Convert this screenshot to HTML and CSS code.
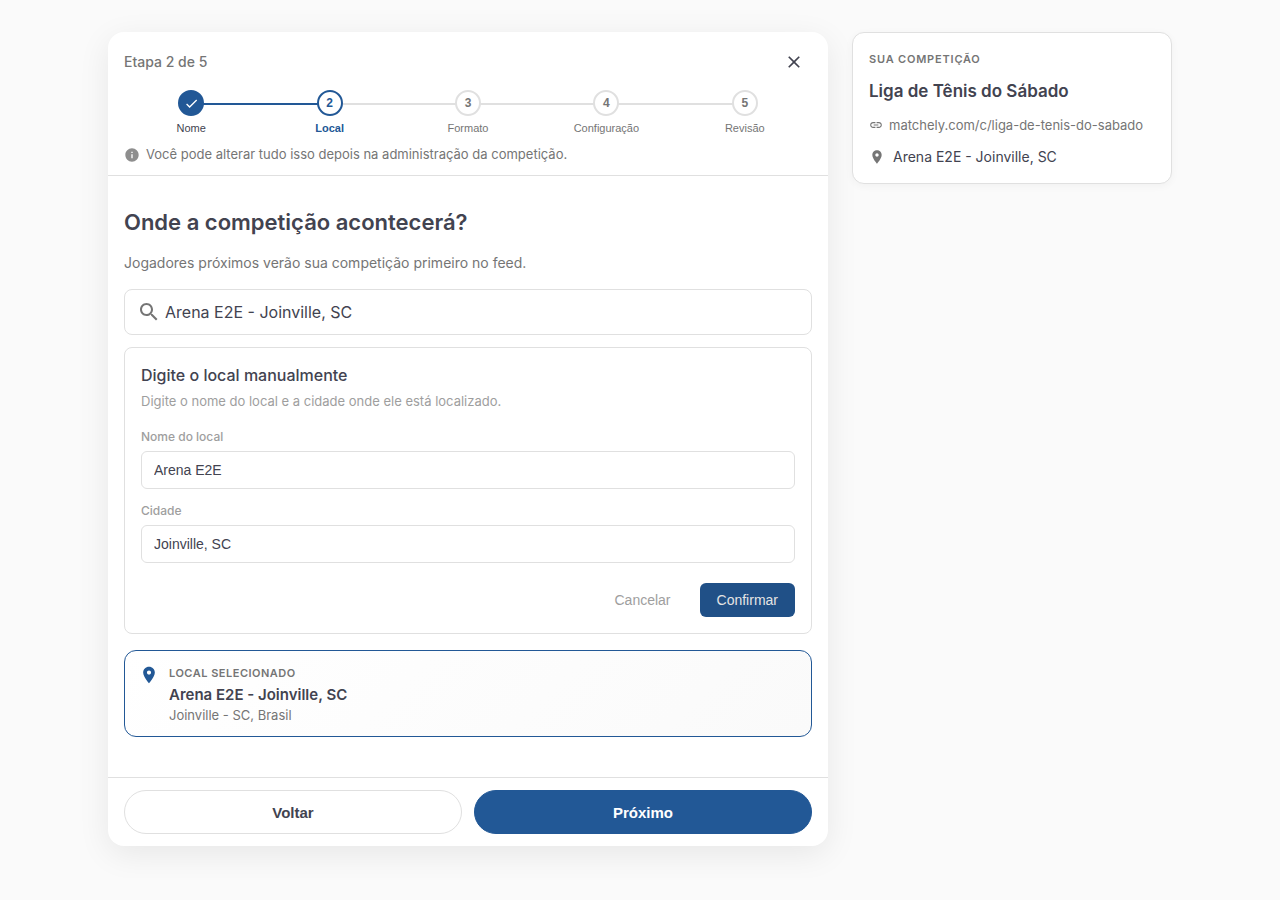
FILE: index.html
```html
<!DOCTYPE html>
<html lang="pt-BR">
<head>
<meta charset="utf-8">
<meta name="viewport" content="width=device-width, initial-scale=1">
<title>Nova competição</title>
<link rel="stylesheet" href="styles.css">
</head>
<body>
<div class="layout">
  <main class="wizard">
    <header class="wizard-header">
      <div class="topbar">
        <span class="step-count">Etapa 2 de 5</span>
        <button class="close" type="button" aria-label="Fechar">
          <svg width="20" height="20" viewBox="0 0 24 24" fill="currentColor"><path d="M19 6.41 17.59 5 12 10.59 6.41 5 5 6.41 10.59 12 5 17.59 6.41 19 12 13.41 17.59 19 19 17.59 13.41 12z"/></svg>
        </button>
      </div>
      <ol class="steps">
        <li class="step done"><span class="dot"><svg width="15" height="15" viewBox="0 0 24 24" fill="currentColor"><path d="M9 16.17 4.83 12l-1.42 1.41L9 19 21 7l-1.41-1.41z"/></svg></span><span class="step-label">Nome</span></li>
        <li class="step current" aria-current="step"><span class="dot">2</span><span class="step-label">Local</span></li>
        <li class="step"><span class="dot">3</span><span class="step-label">Formato</span></li>
        <li class="step"><span class="dot">4</span><span class="step-label">Configuração</span></li>
        <li class="step"><span class="dot">5</span><span class="step-label">Revisão</span></li>
      </ol>
      <p class="hint">
        <svg width="16" height="16" viewBox="0 0 24 24" fill="currentColor"><path d="M12 2C6.48 2 2 6.48 2 12s4.48 10 10 10 10-4.48 10-10S17.52 2 12 2m1 15h-2v-6h2zm0-8h-2V7h2z"/></svg>
        <span>Você pode alterar tudo isso depois na administração da competição.</span>
      </p>
    </header>

    <section class="content">
      <h1>Onde a competição acontecerá?</h1>
      <p class="lead">Jogadores próximos verão sua competição primeiro no feed.</p>

      <label class="search">
        <svg width="24" height="24" viewBox="0 0 24 24" fill="currentColor"><path d="M15.5 14h-.79l-.28-.27C15.41 12.59 16 11.11 16 9.5 16 5.91 13.09 3 9.5 3S3 5.91 3 9.5 5.91 16 9.5 16c1.61 0 3.09-.59 4.23-1.57l.27.28v.79l5 4.99L20.49 19zm-6 0C7.01 14 5 11.99 5 9.5S7.01 5 9.5 5 14 7.01 14 9.5 11.99 14 9.5 14"/></svg>
        <input type="text" aria-label="Buscar local" value="Arena E2E - Joinville, SC">
      </label>

      <form class="manual">
        <h2>Digite o local manualmente</h2>
        <p class="manual-text">Digite o nome do local e a cidade onde ele está localizado.</p>
        <label class="field-label" for="venue">Nome do local</label>
        <input class="field" id="venue" type="text" value="Arena E2E">
        <label class="field-label" for="city">Cidade</label>
        <input class="field" id="city" type="text" value="Joinville, SC">
        <div class="manual-actions">
          <button class="cancel" type="button">Cancelar</button>
          <button class="confirm" type="button">Confirmar</button>
        </div>
      </form>

      <div class="selected">
        <svg width="20" height="20" viewBox="0 0 24 24" fill="currentColor"><path d="M12 2C8.13 2 5 5.13 5 9c0 5.25 7 13 7 13s7-7.75 7-13c0-3.87-3.13-7-7-7m0 9.5c-1.38 0-2.5-1.12-2.5-2.5s1.12-2.5 2.5-2.5 2.5 1.12 2.5 2.5-1.12 2.5-2.5 2.5"/></svg>
        <div>
          <p class="overline">LOCAL SELECIONADO</p>
          <p class="selected-name">Arena E2E - Joinville, SC</p>
          <p class="selected-city">Joinville - SC, Brasil</p>
        </div>
      </div>
    </section>

    <footer class="wizard-footer">
      <button class="nav-button back" type="button">Voltar</button>
      <button class="nav-button next" type="button">Próximo</button>
    </footer>
  </main>

  <aside class="summary">
    <p class="overline">SUA COMPETIÇÃO</p>
    <h2>Liga de Tênis do Sábado</h2>
    <p class="summary-link">
      <svg width="14" height="14" viewBox="0 0 24 24" fill="currentColor"><path d="M3.9 12c0-1.71 1.39-3.1 3.1-3.1h4V7H7c-2.76 0-5 2.24-5 5s2.24 5 5 5h4v-1.9H7c-1.71 0-3.1-1.39-3.1-3.1M8 13h8v-2H8zm9-6h-4v1.9h4c1.71 0 3.1 1.39 3.1 3.1s-1.39 3.1-3.1 3.1h-4V17h4c2.76 0 5-2.24 5-5s-2.24-5-5-5"/></svg>
      <span>matchely.com/c/liga-de-tenis-do-sabado</span>
    </p>
    <p class="summary-place">
      <svg width="16" height="16" viewBox="0 0 24 24" fill="currentColor"><path d="M12 2C8.13 2 5 5.13 5 9c0 5.25 7 13 7 13s7-7.75 7-13c0-3.87-3.13-7-7-7m0 9.5c-1.38 0-2.5-1.12-2.5-2.5s1.12-2.5 2.5-2.5 2.5 1.12 2.5 2.5-1.12 2.5-2.5 2.5"/></svg>
      <span>Arena E2E - Joinville, SC</span>
    </p>
  </aside>
</div>
</body>
</html>
```

FILE: styles.css
```css
:root {
  --blue: #225896;
  --ink: #424350;
  --muted: #757575;
  --faint: #9e9e9e;
  --line: #e0e0e0;
}

* { box-sizing: border-box; }

body {
  margin: 0;
  background: #fafafa;
  color: var(--ink);
  font-family: Inter, sans-serif;
}

h1, h2, p, ol { margin: 0; padding: 0; }
svg { display: block; flex: none; }
button, input { font-family: "Liberation Sans", Arial, sans-serif; }
button { cursor: pointer; }

.layout {
  display: grid;
  grid-template-columns: minmax(0, 720px) 320px;
  justify-content: center;
  align-items: start;
  gap: 24px;
  padding: 32px 24px;
}

.wizard {
  background: #fff;
  border-radius: 16px;
  box-shadow: 0 8px 32px rgba(0, 0, 0, 0.08);
}

.wizard-header {
  padding: 12px 16px 10px;
  border-bottom: 1px solid var(--line);
}

.topbar {
  display: flex;
  align-items: center;
  justify-content: space-between;
  height: 36px;
}

.step-count { font-size: 14px; font-weight: 500; line-height: 20px; color: var(--muted); }

.close {
  padding: 8px;
  border: 0;
  background: none;
  color: var(--ink);
}

.steps {
  display: grid;
  grid-template-columns: repeat(5, 1fr);
  gap: 4px;
  margin-top: 10px;
  list-style: none;
}

.step {
  position: relative;
  display: flex;
  flex-direction: column;
  align-items: center;
  gap: 4px;
  font-family: "Liberation Sans", Arial, sans-serif;
  color: var(--muted);
}

.step:not(:last-child)::after {
  content: "";
  position: absolute;
  top: 13px;
  left: 50%;
  width: calc(100% + 4px);
  height: 2px;
  background: var(--line);
}

.dot {
  position: relative;
  z-index: 1;
  display: grid;
  place-items: center;
  width: 26px;
  height: 26px;
  border: 2px solid var(--line);
  border-radius: 50%;
  background: #fff;
  font-size: 12px;
  font-weight: 700;
}

.step-label { font-size: 11px; line-height: 16px; }

.step.done { color: var(--ink); }
.step.done .dot { border-color: var(--blue); background: var(--blue); color: #fff; }
.step.done::after { background: var(--blue); }
.step.current { color: var(--blue); font-weight: 700; }
.step.current .dot { border-color: var(--blue); }

.hint {
  display: flex;
  align-items: center;
  gap: 6px;
  margin-top: 8px;
  font-size: 13px;
  line-height: 21px;
  color: var(--muted);
}

.hint svg { color: #8e8e8e; }

.content { padding: 32px 16px 40px; }

h1 { font-size: 22px; font-weight: 600; line-height: 28px; }

.lead {
  margin-top: 16px;
  font-size: 14px;
  line-height: 22px;
  color: var(--muted);
}

.search {
  display: flex;
  align-items: center;
  gap: 4px;
  height: 46px;
  margin-top: 15px;
  padding: 0 12px;
  border: 1px solid var(--line);
  border-radius: 8px;
}

.search svg { color: var(--muted); }

.search input {
  flex: 1;
  min-width: 0;
  padding: 0;
  border: 0;
  outline: 0;
  background: none;
  font-family: Inter, sans-serif;
  font-size: 16px;
  color: var(--ink);
}

.manual {
  margin-top: 12px;
  padding: 16px;
  border: 1px solid var(--line);
  border-radius: 8px;
}

.manual h2 { font-size: 16px; font-weight: 500; line-height: 22px; }

.manual-text {
  margin: 4px 0 17px;
  font-size: 13px;
  line-height: 22px;
  color: var(--faint);
}

.field-label {
  display: block;
  margin-bottom: 6px;
  font-size: 12px;
  font-weight: 500;
  line-height: 16px;
  color: var(--faint);
}

.field {
  display: block;
  width: 100%;
  height: 38px;
  margin-bottom: 14px;
  padding: 0 12px;
  border: 1px solid var(--line);
  border-radius: 6px;
  background: #fff;
  font-size: 14px;
  color: var(--ink);
}

.manual-actions {
  display: flex;
  justify-content: flex-end;
  gap: 12px;
  margin-top: 20px;
}

.manual-actions button {
  height: 34px;
  padding: 0 16px;
  border: 1px solid transparent;
  border-radius: 6px;
  font-size: 14px;
}

.manual-actions .cancel { background: none; color: var(--faint); }
.manual-actions .confirm { background: #205087; color: #e4e4e4; }

.selected {
  display: flex;
  gap: 10px;
  margin-top: 16px;
  padding: 14px 14px 10px;
  border: 1px solid var(--blue);
  border-radius: 12px;
  background: linear-gradient(135deg, #fff, #fafafa);
}

.selected svg { color: var(--blue); }

.overline {
  font-size: 11px;
  font-weight: 600;
  line-height: 16px;
  letter-spacing: 0.8px;
  color: var(--muted);
}

.selected .overline { letter-spacing: 0.5px; }
.selected-name { margin-top: 3px; font-size: 15px; font-weight: 600; line-height: 21px; }
.selected-city { font-size: 13px; line-height: 21px; color: var(--muted); }

.wizard-footer {
  display: grid;
  grid-template-columns: 1fr 1fr;
  gap: 12px;
  padding: 12px 16px;
  border-top: 1px solid var(--line);
}

.nav-button {
  height: 44px;
  border: 1px solid var(--line);
  border-radius: 22px;
  font-size: 15px;
  font-weight: 700;
}

.back { background: #fff; color: var(--ink); }
.next { border-color: var(--blue); background: var(--blue); color: #fff; }

.summary {
  padding: 16px;
  border: 1px solid var(--line);
  border-radius: 12px;
  background: #fff;
  box-shadow: 0 2px 8px rgba(0, 0, 0, 0.04);
}

.summary .overline { line-height: 20px; }
.summary h2 { margin-top: 10px; font-size: 17px; font-weight: 600; line-height: 24px; }

.summary-link,
.summary-place {
  display: flex;
  align-items: center;
  font-size: 13px;
  line-height: 20px;
}

.summary-link { gap: 6px; margin-top: 12px; color: var(--muted); }
.summary-place { gap: 8px; margin-top: 12px; font-size: 14px; }
.summary-place svg { color: var(--muted); }
```
